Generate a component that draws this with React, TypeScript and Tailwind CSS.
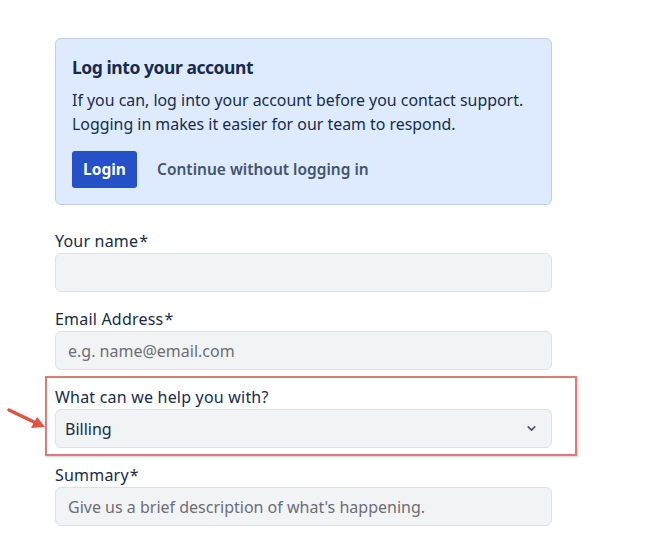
import { ChevronDown } from "lucide-react";

const font = { fontFamily: '"Noto Sans", Arial, sans-serif' };

function Field({ label, required, placeholder }: { label: string; required?: boolean; placeholder?: string }) {
  return (
    <div className="flex flex-col">
      <label className="text-[16px] leading-5 text-[#172b4d] tracking-[0.2px]">
        {label}
        {required && <span className="ml-[1px]">*</span>}
      </label>
      <input
        placeholder={placeholder}
        className="mt-[2px] h-[39px] rounded-md border border-[#dfe1e6] bg-[#f2f3f5] px-3 text-[16px] text-[#172b4d] placeholder:text-[#6b6e76] outline-none"
        style={font}
      />
    </div>
  );
}

export default function App() {
  return (
    <main className="relative min-h-screen w-[657px] h-[541px] overflow-hidden bg-white" style={font}>
      <div className="ml-[55px] w-[497px] pt-[38px]">
        <div className="rounded-md border border-[#bcd0ee] bg-[#deebfe] px-4 pt-4 pb-4">
          <h1 className="text-[17.5px] font-bold leading-6 tracking-[-0.45px] text-[#172b4d]">
            Log into your account
          </h1>
          <p className="mt-[9px] text-[15.9px] leading-6 text-[#172b4d]">
            If you can, log into your account before you contact support.
            <br />
            Logging in makes it easier for our team to respond.
          </p>
          <div className="mt-[15px] flex items-center gap-5">
            <button className="h-[37px] w-[65px] rounded-[3px] bg-[#2550c8] text-[15.5px] font-bold text-white">
              Login
            </button>
            <span className="text-[15.5px] font-semibold text-[#44546f]">Continue without logging in</span>
          </div>
        </div>

        <div className="mt-[26px] flex flex-col gap-[17px]">
          <Field label="Your name" required />
          <Field label="Email Address" required placeholder="e.g. name@email.com" />
          <div className="flex flex-col">
            <label className="text-[16px] leading-5 text-[#172b4d] tracking-[0.2px]">What can we help you with?</label>
            <div className="mt-[2px] flex h-[39px] items-center justify-between rounded-md border border-[#dfe1e6] bg-[#f2f3f5] pl-[9px] pr-[13px]">
              <span className="text-[16px] text-[#172b4d]">Billing</span>
              <ChevronDown size={13} strokeWidth={3} className="text-[#44546f]" />
            </div>
          </div>
          <Field label="Summary" required placeholder="Give us a brief description of what's happening." />
        </div>
      </div>

      {/* annotation overlay */}
      <div className="pointer-events-none absolute left-[45px] top-[376px] h-[80px] w-[532px] border-2 border-[#dc7b78] shadow-[1px_1px_2px_rgba(0,0,0,0.2)]" />
      <svg className="pointer-events-none absolute left-0 top-[400px]" width="50" height="35" viewBox="0 0 50 35">
        <line x1="9" y1="10" x2="36" y2="23" stroke="#e2533f" strokeWidth="3.5" strokeLinecap="round" />
        <polygon points="45,27 31,28 37,17" fill="#e2533f" />
      </svg>
    </main>
  );
}
